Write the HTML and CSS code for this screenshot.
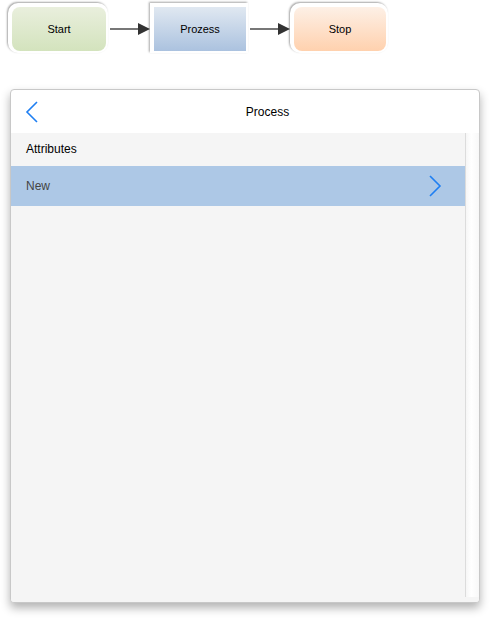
FILE: index.html
```html
<!DOCTYPE html>
<html>
  <head>
    <meta charset="utf-8">
    <title>Process</title>
    <link rel="stylesheet" href="styles.css">
  </head>
  <body>
    <div id='flow'>
      <div class='step step-start'><span>Start</span></div>
      <div class='arrow'><span class='arrow-line'></span><span class='arrow-head'></span></div>
      <div class='step step-process'><span>Prozess</span></div>
      <div class='arrow'><span class='arrow-line'></span><span class='arrow-head'></span></div>
      <div class='step step-stop'><span>Stop</span></div>
    </div>

    <div id='panel'>
      <div class='panel-header'>
        <a class='back'>
          <svg width='14' height='22' viewBox='0 0 14 22'>
            <polyline points='12,1 2,11 12,21' fill='none' stroke='#1f7ff2' stroke-width='1.6'/>
          </svg>
        </a>
        <div class='panel-title'>Process</div>
      </div>
      <div class='panel-body'>
        <div class='list'>
          <div class='list-section'>Attributes</div>
          <div class='list-item'>
            <span>New</span>
            <svg width='14' height='22' viewBox='0 0 14 22'>
              <polyline points='2,1 12,11 2,21' fill='none' stroke='#1f7ff2' stroke-width='1.6'/>
            </svg>
          </div>
        </div>
        <div class='scroll-track'></div>
      </div>
    </div>
  </body>
</html>
```

FILE: styles.css
```css
* {
  margin: 0;
  padding: 0;
  box-sizing: border-box;
  font-family: 'Liberation Sans', Arial, sans-serif;
}
body {
  background-color: white;
  width: 490px;
  height: 619px;
  overflow: hidden;
}
#flow {
  display: flex;
  align-items: center;
  padding: 3px 0 0 8px;
}
.step {
  width: 98px;
  height: 50px;
  padding: 4px 2px 2px 4px;
  background-color: white;
  box-shadow: -1px -1px 2px rgba(0,0,0,0.35);
  flex-shrink: 0;
}
.step span {
  display: flex;
  align-items: center;
  justify-content: center;
  height: 100%;
  font-size: 11px;
  color: black;
}
.step-start {
  width: 100px;
  border-radius: 10px;
}
.step-start span {
  border-radius: 8px;
  background: linear-gradient(#e9efdd, #d3e3bd);
}
.step-process span {
  background: linear-gradient(#e0e8f1, #abc2df);
}
.step-stop {
  border-radius: 10px;
}
.step-stop span {
  border-radius: 8px;
  background: linear-gradient(#fdf0e6, #ffd1ae);
}
.arrow {
  display: flex;
  align-items: center;
  width: 42px;
  padding-left: 2px;
  margin-top: 2px;
}
.arrow-line {
  flex-grow: 1;
  height: 2px;
  background-color: #777777;
}
.arrow-head {
  width: 0;
  height: 0;
  border-top: 6px solid transparent;
  border-bottom: 6px solid transparent;
  border-left: 12px solid #333333;
}
#panel {
  margin: 36px 0 0 10px;
  width: 470px;
  height: 514px;
  border: 1px solid #c8c8c8;
  border-radius: 4px;
  background-color: white;
  box-shadow: 0 5px 10px rgba(0,0,0,0.3);
  display: flex;
  flex-direction: column;
  overflow: hidden;
}
.panel-header {
  display: flex;
  align-items: center;
  height: 43px;
  flex-shrink: 0;
}
.back {
  display: flex;
  padding: 0 0 0 14px;
  width: 43px;
}
.panel-title {
  flex-grow: 1;
  text-align: center;
  font-size: 12px;
  color: black;
  margin-left: 2px;
}
.panel-body {
  flex-grow: 1;
  display: flex;
  background-color: #f5f5f5;
}
.list {
  flex-grow: 1;
}
.list-section {
  height: 33px;
  padding: 9px 0 0 15px;
  font-size: 12px;
  color: black;
}
.list-item {
  display: flex;
  align-items: center;
  justify-content: space-between;
  height: 40px;
  padding: 0 23px 0 15px;
  background-color: #adc8e6;
  font-size: 12px;
  color: #444444;
}
.scroll-track {
  width: 14px;
  margin-bottom: 5px;
  border-left: 1px solid #dcdcdc;
  background: linear-gradient(to right, #f6f6f6, #ffffff 40%, #f8f8f8);
}
```
